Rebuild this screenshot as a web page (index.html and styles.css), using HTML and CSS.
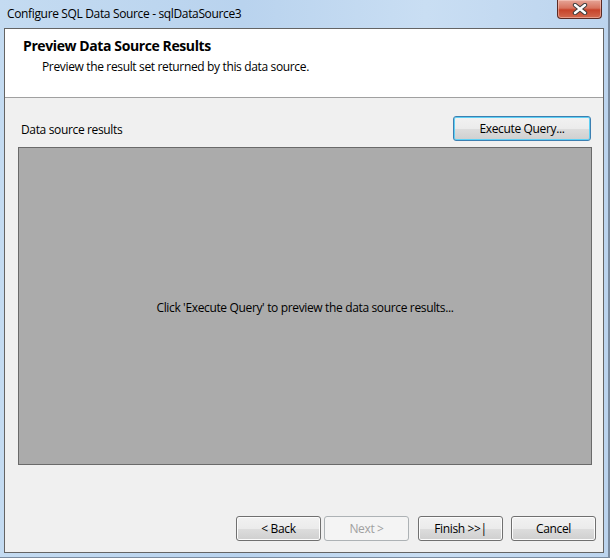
FILE: index.html
```html
<!DOCTYPE html>
<html lang="en">
<head>
    <meta charset="UTF-8">
    <title>Configure SQL Data Source - sqlDataSource3</title>
    <link rel="stylesheet" href="styles.css">
</head>
<body>
    <div class="window">
        <div class="titlebar">
            <span class="title">Configure SQL Data Source - sqlDataSource3</span>
            <div class="close">
                <svg width="16" height="12" viewBox="0 0 16 12">
                    <path d="M3 2 L13 10 M13 2 L3 10" stroke="#3c3c3c" stroke-width="4.4" stroke-linecap="round"/>
                    <path d="M3 2 L13 10 M13 2 L3 10" stroke="#ffffff" stroke-width="2.4" stroke-linecap="round"/>
                </svg>
            </div>
        </div>

        <div class="client">
            <div class="header">
                <h1>Preview Data Source Results</h1>
                <p>Preview the result set returned by this data source.</p>
            </div>

            <div class="page">
                <div class="results-bar">
                    <span>Data source results</span>
                    <button class="btn default">Execute Query...</button>
                </div>
                <div class="results">
                    Click 'Execute Query' to preview the data source results...
                </div>

                <div class="footer">
                    <button class="btn">&lt; Back</button>
                    <button class="btn" disabled>Next &gt;</button>
                    <button class="btn finish">Finish &gt;&gt;|</button>
                    <button class="btn">Cancel</button>
                </div>
            </div>
        </div>
    </div>
</body>
</html>
```

FILE: styles.css
```css
body {
    margin: 0;
    font-family: "Open Sans", "Liberation Sans", sans-serif;
    font-size: 12px;
    color: #000;
}

.window {
    width: 610px;
    height: 558px;
    box-sizing: border-box;
    display: flex;
    flex-direction: column;
    background: linear-gradient(to right, #c4dbf1, #b9d3ee 40%, #c9def3 70%, #bcd4ee);
    border-right: 2px solid #7b8ca0;
    border-bottom: 1px solid #7b8ca0;
}

.titlebar {
    height: 28px;
    display: flex;
    align-items: flex-start;
    justify-content: space-between;
    padding-left: 7px;
}

.title {
    margin-top: 5px;
    font-size: 12px;
    letter-spacing: -0.35px;
}

.close {
    width: 45px;
    height: 19px;
    margin-right: 6px;
    display: flex;
    align-items: center;
    justify-content: center;
    box-sizing: border-box;
    border: 1px solid #5a2a24;
    border-top: none;
    border-radius: 0 0 4px 4px;
    background: linear-gradient(to bottom, #e6a597, #d7735e 45%, #c7432a 55%, #d26a4f);
    box-shadow: inset 0 0 0 1px rgba(255, 220, 210, 0.45);
}

.client {
    flex: 1;
    margin: 0 4px 4px 4px;
    border: 1px solid #646464;
    display: flex;
    flex-direction: column;
    background: #f0f0f0;
}

.header {
    height: 69px;
    background: #fff;
    border-bottom: 1px solid #a0a0a0;
    padding-left: 18px;
    box-sizing: border-box;
}

.header h1 {
    margin: 0;
    padding-top: 7px;
    font-size: 14px;
    font-weight: 700;
    letter-spacing: -0.4px;
}

.header p {
    margin: 3px 0 0 19px;
    letter-spacing: -0.35px;
}

.page {
    flex: 1;
    display: flex;
    flex-direction: column;
    padding: 18px 11px 11px 13px;
}

.results-bar {
    display: flex;
    justify-content: space-between;
    align-items: center;
    padding-left: 3px;
    padding-right: 1px;
    letter-spacing: -0.35px;
}

.results-bar span {
    margin-top: 2px;
}

.results {
    margin-top: 6px;
    height: 318px;
    box-sizing: border-box;
    background: #ababab;
    border: 1px solid #6a6a6a;
    display: flex;
    align-items: center;
    justify-content: center;
    letter-spacing: -0.35px;
    padding-top: 2px;
}

.footer {
    margin-top: auto;
    margin-right: -4px;
    display: flex;
    justify-content: flex-end;
    gap: 3px;
}

.btn {
    width: 85px;
    height: 25px;
    font-family: inherit;
    font-size: 12px;
    letter-spacing: -0.35px;
    color: #000;
    padding: 0;
    border: 1px solid #707070;
    border-radius: 3px;
    background: linear-gradient(to bottom, #f2f2f2, #ebebeb 50%, #dddddd 51%, #cfcfcf);
    box-shadow: inset 0 0 0 1px #fcfcfc;
}

.btn.default {
    width: 138px;
    border-color: #3c7fb1;
    box-shadow: inset 0 0 0 1px #5fd0f4;
}

.btn:disabled {
    color: #a0a0a0;
    border-color: #adb2b5;
    background: #f4f4f4;
    box-shadow: none;
}

.btn.finish {
    margin-left: 6px;
    margin-right: 5px;
}
```
